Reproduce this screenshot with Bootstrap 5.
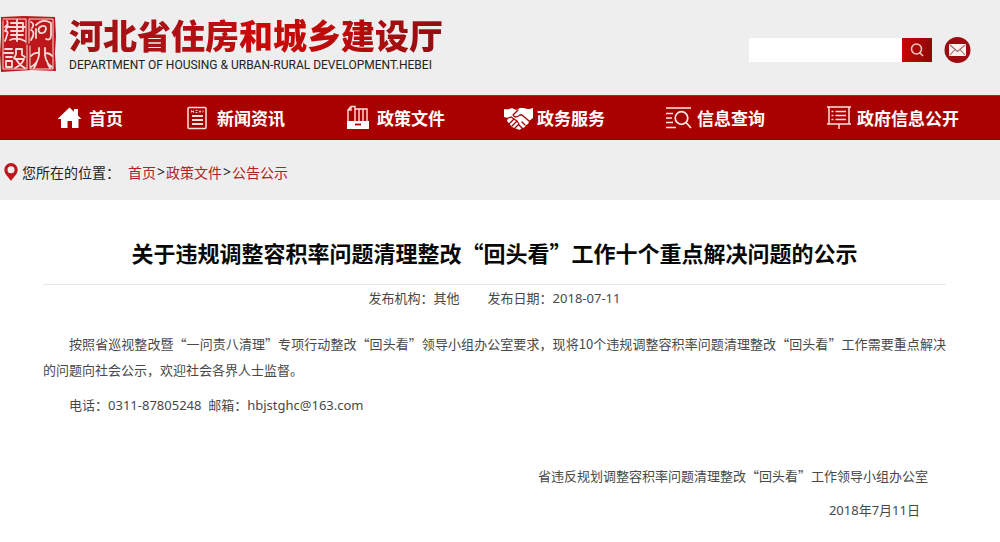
<!DOCTYPE html>
<html lang="zh-CN">
<head>
<meta charset="utf-8">
<meta name="viewport" content="width=device-width, initial-scale=1">
<title>河北省住房和城乡建设厅</title>
<link rel="stylesheet" href="https://cdn.jsdelivr.net/npm/bootstrap@5.3.0/dist/css/bootstrap.min.css">
<style>
body{font-family:"Noto Sans CJK SC",sans-serif;font-size:13px;line-height:26px;color:#484848;background:#fff}
.latin{font-family:"Noto Sans",sans-serif}
.site-top{background:#eee;padding:16px 29px 20px 0}
.seal{width:57px;height:56px;flex:none}
.brand-name{font-size:34px;line-height:38px;font-weight:900;background:linear-gradient(90deg,#a01216,#b01014 35%,#cc0808 50%,#b80c0c 75%,#8c1014);-webkit-background-clip:text;background-clip:text;color:transparent}
.brand-en{font-family:Roboto,"Liberation Sans",sans-serif;font-size:12px;line-height:20px;color:#222;white-space:nowrap;padding-top:1px}
.tools{margin-top:21px}
.search-box{width:153px;height:24px;border:0;background:#fff;padding:0 6px}
.search-btn{width:30px;height:24px;border:0;background:linear-gradient(90deg,#cb0505,#8e0808)}
.main-nav{background:#a90000;border-top:1px solid #b52020;border-bottom:1px solid #8a0000;padding:0 16px 0 56px;height:45px}
.nav-cell{flex:5 1 0}
.nav-cell:first-child{flex-grow:4}
.main-nav a{font-size:17px;line-height:24px;font-weight:700;color:#fff;gap:3px;white-space:nowrap}
.main-nav svg{width:30px;height:26px;flex:none}
.crumbs{background:#eee;font-size:14px;line-height:24px;color:#222;padding:20px 4px 16px;min-height:60px}
.crumbs a{color:#b32025}
.crumbs svg{width:14px;height:18px}
.crumbs .latin{padding:0 1px}
.article{padding:34px 54px 16px 43px}
.article h1{font-size:22px;line-height:36px;font-weight:700;color:#080808;margin:0;padding-bottom:14px;border-bottom:1px solid #e6e6e6}
.meta{gap:28px;margin-bottom:20px}
.article p{text-indent:26px;text-align:justify;margin-bottom:9px}
.signature{margin-top:45px;padding-right:18px}
.signature div:last-child{padding-right:8px;margin-top:8px}
</style>
</head>
<body>
<header class="site-top d-flex align-items-start justify-content-between">
  <div class="d-flex">
    <svg class="seal" viewBox="0 0 57 56" role="img" aria-label="河北建设">
      <path d="M1 1L24 0 55 1 56 20 55 37 56 55 32 54 1 56 0 38 1 20Z" fill="#bd171b"/>
      <g fill="none" stroke="#f3dcd9" stroke-width="1.8" stroke-linecap="round" stroke-linejoin="round">
        <path d="M3 3H26V27M29 27V3H53V53H30V30M27 29V53H3V5" stroke-width="1"/>
        <path d="M7 5Q9 8 5 11M8 10L5 15Q9 15 7 19L5 25M11 7H23V15H11M9 11H25M11 19H23M17 4V25M10 24Q17 21 25 25"/>
        <path d="M31 6Q35 8 32 12M31 14Q36 16 31 24M36 9Q43 2 51 7V19Q51 25 46 23M40 11Q46 8 46 13Q45 18 40 17Q37 14 40 11M36 13V22"/>
        <path d="M5 33H12M4 37H13M6 41H12M6 45H12V51H6V45M16 33V38Q15 41 14 42M16 33H22V39L25 41M15 43H24Q22 49 15 52M16 43Q19 49 25 52"/>
        <path d="M39 32V39Q38 47 31 51M31 40Q34 36 39 37M45 32V39Q46 47 52 51M45 37Q50 37 52 40M37 45Q36 49 34 52M47 45Q48 49 50 52"/>
      </g>
    </svg>
    <div class="ps-2 ms-1">
      <div class="brand-name">河北省住房和城乡建设厅</div>
      <div class="brand-en">DEPARTMENT OF HOUSING &amp; URBAN-RURAL DEVELOPMENT.HEBEI</div>
    </div>
  </div>
  <div class="d-flex align-items-center tools">
    <form class="d-flex" role="search" onsubmit="return false">
      <input class="search-box" type="search" aria-label="搜索">
      <button class="search-btn p-0 d-flex align-items-center justify-content-center" type="submit" aria-label="搜索">
        <svg width="14" height="14" viewBox="0 0 14 14" fill="none" stroke="#f6c8c0" stroke-width="1.6"><circle cx="6.5" cy="6" r="5"/><path d="M9.5 9.5L13 13"/></svg>
      </button>
    </form>
    <a href="#" class="d-flex ms-2 ps-1" aria-label="邮箱">
      <svg width="27" height="26" viewBox="0 0 27 26"><circle cx="13.5" cy="13" r="13" fill="#9d0b10"/><rect x="5" y="7" width="17" height="12" rx="1" fill="#fff0ec"/><path d="M6 8L13.5 14.5 21 8M6 18L11 12.5M21 18L16 12.5" fill="none" stroke="#98686d" stroke-width="1.1"/></svg>
    </a>
  </div>
</header>

<nav class="main-nav d-flex align-items-center" aria-label="主导航">
  <div class="nav-cell"><a href="#" class="d-flex align-items-center text-decoration-none">
    <svg viewBox="0 0 30 26" fill="#fff"><path d="M1.5 14L13.5 2.500 18 6.800V4H22V10.500L25.500 14H22.500V23H16V16H11.500V23H5V14Z"/></svg>首页</a></div>
  <div class="nav-cell"><a href="#" class="d-flex align-items-center text-decoration-none">
    <svg viewBox="0 0 30 26" fill="none" stroke="#ffe1dc" stroke-width="1.5"><rect x="4" y="2.500" width="18" height="21" rx="1"/><path d="M7.500 7.500V5.500L9.500 7.500V5.500M11.500 5.500H13.500M11.500 7.500H13.500M15 5.500L16 7.500 17 5.500M19 5.500V7.500" stroke-width=".9"/><path d="M8 11H19M8 15H19M8 19H19" stroke-width="1.8"/></svg>新闻资讯</a></div>
  <div class="nav-cell"><a href="#" class="d-flex align-items-center text-decoration-none">
    <svg viewBox="0 0 30 26" fill="none" stroke="#ffe1dc" stroke-width="1.4"><path d="M4 16V5L7 1.500H11V16M11 4H15V16M15 4H19V16M19 4H23V16M4 5H7V1.500"/><path d="M3 16H25V24H3Z" fill="#fff" stroke="none"/><path d="M11 19.500H17" stroke="#a40000" stroke-width="1.8"/></svg>政策文件</a></div>
  <div class="nav-cell"><a href="#" class="d-flex align-items-center text-decoration-none">
    <svg viewBox="0 0 30 26"><path d="M0 4Q4 5 8 3L12 5 16 3 20 3Q24 5 29 3V13L25 16Q25 19 22 20Q21 23 18 23Q16 26 13 24L8 22 3 16 4 13 0 12Z" fill="#fff"/><g fill="none" stroke="#a40000" stroke-width="1.300" stroke-linecap="round" stroke-linejoin="round"><path d="M14 5L9 10Q11 14 16 10L18 10 25 16M2 14L7 12 10 14 5 19M10 14L13 16 8 21M13 16L15 19 11 23M18 17L21 20M15 20L18 23"/></g></svg>政务服务</a></div>
  <div class="nav-cell"><a href="#" class="d-flex align-items-center text-decoration-none">
    <svg viewBox="0 0 30 26" fill="none" stroke="#ffe8e4" stroke-width="1.7"><path d="M2 3H27M2 8.500H9M2 13H8M2 17.500H9M2 22.500H12M22 17.500L27 23"/><circle cx="17.500" cy="13" r="6.300"/></svg>信息查询</a></div>
  <div class="nav-cell"><a href="#" class="d-flex align-items-center text-decoration-none">
    <svg viewBox="0 0 30 26" fill="none" stroke="#ffe1dc" stroke-width="1.5"><path d="M3 2H27M3 19H27M5 2V19M25 2V19M15 19V24M11.500 6.500H22M11.500 10.500H22M11.500 14.500H22M7.500 6.500H9.500M7.500 10.500H9.500M7.500 14.500H9.500"/></svg>政府信息公开</a></div>
</nav>

<nav class="crumbs d-flex align-items-center" aria-label="所在位置">
  <svg viewBox="0 0 14 18" aria-hidden="true"><path d="M7 0A6.700 6.700 0 0 0 .3 6.700C.3 11 4.500 14 7 18 9.500 14 13.700 11 13.700 6.700A6.700 6.700 0 0 0 7 0Z" fill="#bd171b"/><circle cx="7" cy="6.700" r="3.500" fill="#eee"/></svg>
  <span class="ms-1 pe-2">您所在的位置：</span>
  <a href="#" class="text-decoration-none">首页</a><span class="latin">&gt;</span><a href="#" class="text-decoration-none">政策文件</a><span class="latin">&gt;</span><a href="#" class="text-decoration-none">公告公示</a>
</nav>

<main class="article">
  <h1 class="text-center">关于违规调整容积率问题清理整改“回头看”工作十个重点解决问题的公示</h1>
  <div class="meta d-flex justify-content-center">
    <span>发布机构：其他</span>
    <span>发布日期：<span class="latin">2018-07-11</span></span>
  </div>
  <p>按照省巡视整改暨“一问责八清理”专项行动整改“回头看”领导小组办公室要求，现将10个违规调整容积率问题清理整改“回头看”工作需要重点解决的问题向社会公示，欢迎社会各界人士监督。</p>
  <p>电话：<span class="latin">0311-87805248&nbsp; </span>邮箱：<span class="latin">hbjstghc@163.com</span></p>
  <div class="signature text-end">
    <div>省违反规划调整容积率问题清理整改“回头看”工作领导小组办公室</div>
    <div><span class="latin">2018</span>年<span class="latin">7</span>月<span class="latin">11</span>日</div>
  </div>
</main>
<script src="https://cdn.jsdelivr.net/npm/bootstrap@5.3.0/dist/js/bootstrap.bundle.min.js"></script>
</body>
</html>
